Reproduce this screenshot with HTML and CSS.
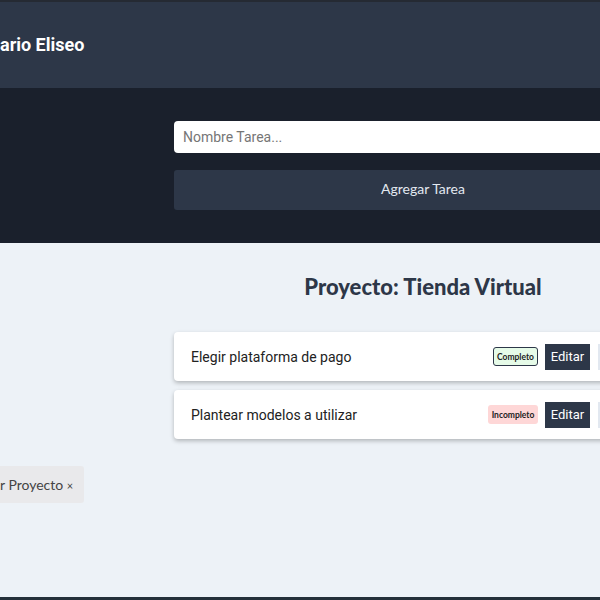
FILE: index.html
```html
<!DOCTYPE html>
<html lang="es">
<head>
<meta charset="utf-8">
<title>Proyecto: Tienda Virtual</title>
<link rel="stylesheet" href="styles.css">
</head>
<body>
<header class="top">
  <span class="user">ario Eliseo</span>
</header>
<section class="form-band">
  <div class="spacer"></div>
  <form class="task-form">
    <input class="task-input" type="text" placeholder="Nombre Tarea...">
    <button class="add-btn" type="button">Agregar Tarea</button>
  </form>
</section>
<div class="content">
  <aside class="side">
    <button class="del-project" type="button">r Proyecto <span class="x">×</span></button>
  </aside>
  <main class="tasks">
    <h2 class="title">Proyecto: Tienda Virtual</h2>
    <ul class="task-list">
      <li class="task">
        <p class="task-name">Elegir plataforma de pago</p>
        <div class="actions">
          <span class="badge done">Completo</span>
          <button class="btn edit" type="button">Editar</button>
          <button class="btn remove" type="button" aria-label="Eliminar"></button>
        </div>
      </li>
      <li class="task">
        <p class="task-name">Plantear modelos a utilizar</p>
        <div class="actions">
          <span class="badge todo">Incompleto</span>
          <button class="btn edit" type="button">Editar</button>
          <button class="btn remove" type="button" aria-label="Eliminar"></button>
        </div>
      </li>
    </ul>
  </main>
</div>
<div class="bottom-strip"></div>
</body>
</html>
```

FILE: styles.css
```css
* { box-sizing: border-box; }
html, body { margin: 0; padding: 0; }
body {
  width: 600px;
  height: 600px;
  overflow: hidden;
  background: #edf2f7;
  font-family: Roboto, "Liberation Sans", sans-serif;
  display: flex;
  flex-direction: column;
}
.top {
  height: 88px;
  flex: none;
  background: #2d3748;
  border-top: 2px solid #252a33;
  display: flex;
  align-items: center;
}
.user {
  color: #ffffff;
  font-weight: 700;
  font-size: 18px;
  line-height: 20px;
}
.form-band {
  flex: none;
  height: 155px;
  background: #1a202c;
  display: grid;
  grid-template-columns: 174px 498px;
  padding-top: 33px;
}
.task-form {
  display: flex;
  flex-direction: column;
  gap: 17px;
}
.task-input {
  height: 32px;
  border: none;
  border-radius: 4px;
  background: #ffffff;
  padding: 0 9px;
  font-family: Roboto, "Liberation Sans", sans-serif;
  font-size: 14px;
  color: #333;
  outline: none;
}
.task-input::placeholder { color: #767676; }
.add-btn {
  height: 40px;
  border: none;
  border-radius: 3px;
  background: #2d3748;
  color: #e2e8f0;
  font-family: Lato, "Open Sans", sans-serif;
  font-size: 14px;
  line-height: 16px;
  padding: 0 0 2px;
}
.content {
  flex: 1;
  display: grid;
  grid-template-columns: 174px 498px;
}
.side {
  padding-top: 223px;
}
.del-project {
  height: 37px;
  width: 84px;
  border: none;
  border-radius: 0 3px 3px 0;
  background: #e9e9eb;
  color: #444;
  font-family: Lato, "Open Sans", sans-serif;
  font-size: 14px;
  text-align: left;
  padding: 0;
  white-space: nowrap;
}
.del-project .x { font-size: 11px; }
.tasks { padding-top: 31px; }
.title {
  margin: 0 0 33px;
  text-align: center;
  font-family: Lato, "Open Sans", sans-serif;
  font-weight: 900;
  font-size: 22px;
  line-height: 25px;
  color: #2d3748;
}
.task-list {
  list-style: none;
  margin: 0;
  padding: 0;
  display: flex;
  flex-direction: column;
  gap: 9px;
}
.task {
  height: 49px;
  background: #ffffff;
  border-radius: 4px;
  box-shadow: 0 2px 4px rgba(0, 0, 0, 0.25);
  display: flex;
  align-items: center;
  padding: 0 17px;
}
.task-name {
  margin: 0;
  font-size: 14px;
  color: #222;
}
.actions {
  margin-left: auto;
  display: flex;
  align-items: center;
}
.badge {
  height: 19px;
  border-radius: 3px;
  font-family: Lato, "Open Sans", sans-serif;
  font-weight: 700;
  font-size: 8.5px;
  color: #222;
  display: flex;
  align-items: center;
  justify-content: center;
  margin-right: 7px;
}
.badge.done {
  width: 45px;
  background: #e6fbe8;
  border: 1.5px solid #2d3748;
}
.badge.todo {
  width: 50px;
  background: #fed7d7;
}
.btn {
  height: 26px;
  border: none;
  border-radius: 0;
  font-family: Roboto, "Liberation Sans", sans-serif;
  font-size: 13px;
  padding: 0;
}
.btn.edit {
  width: 45px;
  background: #2d3748;
  color: #ffffff;
  margin-right: 8px;
}
.btn.remove {
  width: 57px;
  background: #e2e8f0;
  color: #2d3748;
}
.bottom-strip {
  flex: none;
  height: 3px;
  background: #24303a;
}
```
